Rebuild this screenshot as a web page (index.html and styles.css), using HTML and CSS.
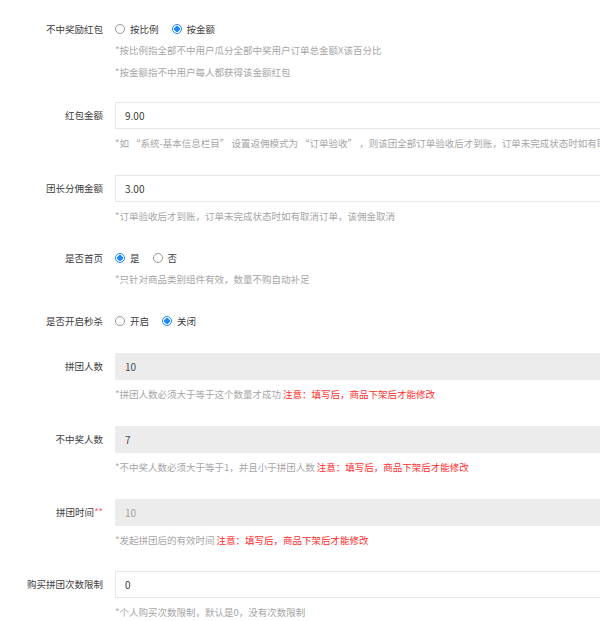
FILE: index.html
```html
<!DOCTYPE html>
<html lang="zh-CN">
<head>
  <meta charset="UTF-8">
  <meta name="viewport" content="width=device-width, initial-scale=1.0">
  <title>拼团设置</title>
  <link rel="stylesheet" href="styles.css">
</head>
<body>
  <div class="form">
    <div class="item item-first">
      <label class="item-label radio-label">不中奖励红包</label>
      <div class="item-body">
        <div class="radios">
          <label class="radio"><input type="radio" name="hb"> 按比例</label>
          <label class="radio"><input type="radio" name="hb" checked> 按金额</label>
        </div>
        <p class="tip tip-tight">*按比例指全部不中用户瓜分全部中奖用户订单总金额X该百分比</p>
        <p class="tip tip-tight">*按金额指不中用户每人都获得该金额红包</p>
      </div>
    </div>

    <div class="item">
      <label class="item-label">红包金额</label>
      <div class="item-body">
        <input class="text-input" type="text" value="9.00">
        <p class="tip">*如 “系统-基本信息栏目” 设置返佣模式为 “订单验收” ，则该团全部订单验收后才到账，订单未完成状态时如有取消订单，该红包取消</p>
      </div>
    </div>

    <div class="item">
      <label class="item-label">团长分佣金额</label>
      <div class="item-body">
        <input class="text-input" type="text" value="3.00">
        <p class="tip">*订单验收后才到账，订单未完成状态时如有取消订单，该佣金取消</p>
      </div>
    </div>

    <div class="item">
      <label class="item-label radio-label">是否首页</label>
      <div class="item-body">
        <div class="radios">
          <label class="radio"><input type="radio" name="sy" checked> 是</label>
          <label class="radio"><input type="radio" name="sy"> 否</label>
        </div>
        <p class="tip tip-tight">*只针对商品类别组件有效，数量不购自动补足</p>
      </div>
    </div>

    <div class="item item-short">
      <label class="item-label radio-label">是否开启秒杀</label>
      <div class="item-body">
        <div class="radios">
          <label class="radio"><input type="radio" name="ms"> 开启</label>
          <label class="radio"><input type="radio" name="ms" checked> 关闭</label>
        </div>
      </div>
    </div>

    <div class="item">
      <label class="item-label">拼团人数</label>
      <div class="item-body">
        <input class="text-input" type="text" value="10" disabled>
        <p class="tip">*拼团人数必须大于等于这个数量才成功 <span class="warn">注意：填写后，商品下架后才能修改</span></p>
      </div>
    </div>

    <div class="item">
      <label class="item-label">不中奖人数</label>
      <div class="item-body">
        <input class="text-input" type="text" value="7" disabled>
        <p class="tip">*不中奖人数必须大于等于1，并且小于拼团人数 <span class="warn">注意：填写后，商品下架后才能修改</span></p>
      </div>
    </div>

    <div class="item item-time">
      <label class="item-label">拼团时间<span class="req">**</span></label>
      <div class="item-body">
        <input class="text-input muted" type="text" value="10" disabled>
        <p class="tip">*发起拼团后的有效时间 <span class="warn">注意：填写后，商品下架后才能修改</span></p>
      </div>
    </div>

    <div class="item">
      <label class="item-label">购买拼团次数限制</label>
      <div class="item-body">
        <input class="text-input" type="text" value="0">
        <p class="tip">*个人购买次数限制，默认是0，没有次数限制</p>
      </div>
    </div>
  </div>
</body>
</html>
```

FILE: styles.css
```css
body {
  margin: 0;
  background: #fff;
  color: #3c3c3c;
  font-family: "Noto Sans CJK SC", "Noto Sans", sans-serif;
  font-size: 9.5px;
  overflow: hidden;
}
.form {
  padding-top: 19px;
  width: 760px;
}
.item {
  display: flex;
  margin-bottom: 21px;
}
.item-first {
  margin-bottom: 19px;
}
.item-short {
  margin-bottom: 22px;
}
.item-time {
  margin-bottom: 20px;
}
.item-label {
  width: 103px;
  flex-shrink: 0;
  padding-right: 12px;
  text-align: right;
  line-height: 27px;
  white-space: nowrap;
}
.item-label.radio-label {
  line-height: 20px;
}
.req {
  color: #ff5a5a;
}
.item-body {
  flex: 1;
  min-width: 0;
}
.radios {
  display: flex;
  gap: 13px;
  height: 20px;
  align-items: center;
}
.radio {
  display: flex;
  align-items: center;
  gap: 5px;
}
.radio input {
  appearance: none;
  -webkit-appearance: none;
  margin: 0;
  width: 10px;
  height: 10px;
  border: 1px solid #999;
  border-radius: 50%;
  box-sizing: border-box;
  background: #fff;
}
.radio input:checked {
  border-color: #1e88ff;
  background: radial-gradient(circle, #1e88ff 0 2.6px, #fff 3px);
}
.text-input {
  display: block;
  width: 640px;
  height: 27px;
  box-sizing: border-box;
  border: 1px solid #e6e6e6;
  padding: 0 9px;
  font-family: inherit;
  font-size: 10px;
  color: #3c3c3c;
  background: #fff;
  outline: none;
}
.text-input:disabled {
  background: #ececec;
  border-color: #ececec;
  color: #4a4a4a;
}
.text-input.muted:disabled {
  color: #a0a0a0;
}
.tip {
  margin: 3px 0 0;
  line-height: 22px;
  color: #a6a6a6;
  white-space: nowrap;
}
.tip-tight {
  margin-top: 0;
}
.warn {
  color: #ff2d2d;
}
```
